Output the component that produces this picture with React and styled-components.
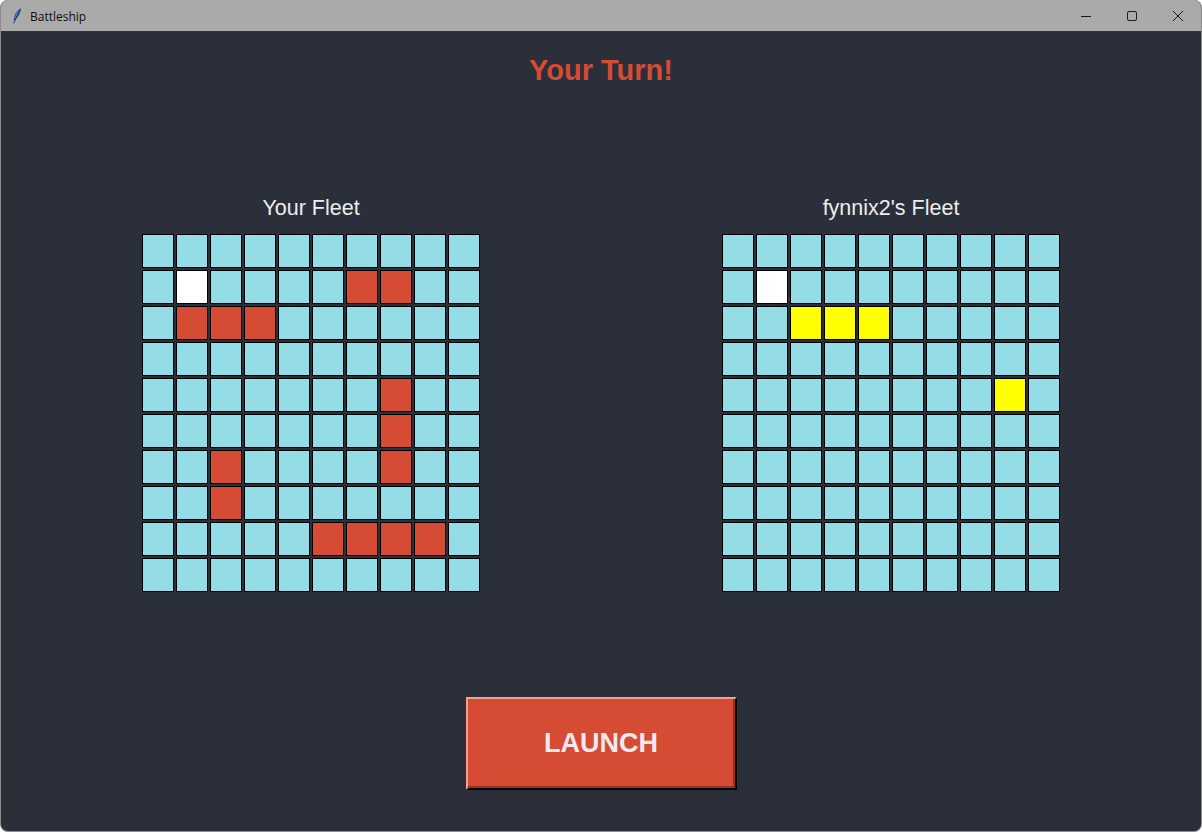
import React from "react";
import styled, { createGlobalStyle } from "styled-components";

const GlobalStyle = createGlobalStyle`
    html, body {
        margin: 0;
        padding: 0;
        background: #ffffff;
    }
    body {
        font-family: "Liberation Sans", Arial, sans-serif;
    }
`;

// 0 agua, 1 barco/impacto rojo, 2 fallo blanco, 3 impacto amarillo
const myFleet = [
    "0000000000",
    "0200001100",
    "0111000000",
    "0000000000",
    "0000000100",
    "0000000100",
    "0010000100",
    "0010000000",
    "0000011110",
    "0000000000",
];

const enemyFleet = [
    "0000000000",
    "0200000000",
    "0033300000",
    "0000000000",
    "0000000030",
    "0000000000",
    "0000000000",
    "0000000000",
    "0000000000",
    "0000000000",
];

const cellColors = {
    0: "#94dde6",
    1: "#d64b34",
    2: "#ffffff",
    3: "#ffff00",
};

const Feather = () => (
    <svg width="10" height="16" viewBox="0 0 10 16">
        <path d="M8.6 0.8 C5.5 2.5 3.2 5.8 2.4 10.2 L2.1 12.2 C4.8 10.4 7.4 6.8 8.6 0.8 Z" fill="#4d8fe0" stroke="#1d3d78" strokeWidth="0.8" />
        <path d="M7.8 2.4 L2.6 13.2 L1.6 15.4" fill="none" stroke="#1a2a48" strokeWidth="0.9" />
    </svg>
);

const App = () => {
    return (
        <>
            <GlobalStyle />
            <Ventana>
                <BarraTitulo>
                    <Titulo>
                        <Feather />
                        <span>Battleship</span>
                    </Titulo>
                    <Controles>
                        <Control>
                            <svg width="12" height="12" viewBox="0 0 12 12">
                                <line x1="1" y1="6.5" x2="11" y2="6.5" stroke="#1a1a1a" strokeWidth="1" />
                            </svg>
                        </Control>
                        <Control>
                            <svg width="12" height="12" viewBox="0 0 12 12">
                                <rect x="1.5" y="1.5" width="9" height="9" rx="1.5" fill="none" stroke="#1a1a1a" strokeWidth="1" />
                            </svg>
                        </Control>
                        <Control>
                            <svg width="12" height="12" viewBox="0 0 12 12">
                                <path d="M1 1 L11 11 M11 1 L1 11" stroke="#1a1a1a" strokeWidth="1" />
                            </svg>
                        </Control>
                    </Controles>
                </BarraTitulo>
                <Contenido>
                    <Turno>Your Turn!</Turno>
                    <Tableros>
                        <Panel>
                            <Etiqueta>Your Fleet</Etiqueta>
                            <Tablero>
                                {myFleet.map((row, r) =>
                                    row.split("").map((c, i) => <Celda key={r + "-" + i} $tipo={c} />)
                                )}
                            </Tablero>
                        </Panel>
                        <Panel>
                            <Etiqueta>fynnix2's Fleet</Etiqueta>
                            <Tablero>
                                {enemyFleet.map((row, r) =>
                                    row.split("").map((c, i) => <Celda key={r + "-" + i} $tipo={c} />)
                                )}
                            </Tablero>
                        </Panel>
                    </Tableros>
                    <BotonLanzar>LAUNCH</BotonLanzar>
                </Contenido>
            </Ventana>
        </>
    );
};

export default App;

const Ventana = styled.div`
    width: 1202px;
    height: 832px;
    box-sizing: border-box;
    display: flex;
    flex-direction: column;
    border-radius: 8px;
    overflow: hidden;
    background: #2b2f3a;
    border: 1px solid #8c8c8c;
    border-top: none;
`;

const BarraTitulo = styled.div`
    height: 31px;
    flex-shrink: 0;
    background: #aaaaaa;
    display: flex;
    align-items: center;
    justify-content: space-between;
`;

const Titulo = styled.div`
    display: flex;
    align-items: center;
    gap: 8px;
    padding-left: 11px;
    font-family: "Open Sans", "Noto Sans", sans-serif;
    font-size: 12px;
    color: #111111;
    padding-top: 1px;
`;

const Controles = styled.div`
    display: flex;
    height: 100%;
`;

const Control = styled.div`
    width: 46px;
    height: 100%;
    display: flex;
    align-items: center;
    justify-content: center;
`;

const Contenido = styled.div`
    flex: 1;
    display: flex;
    flex-direction: column;
    align-items: center;
    padding-top: 23px;
`;

const Turno = styled.h1`
    margin: 0;
    font-family: "Liberation Sans", Arial, sans-serif;
    font-size: 29px;
    line-height: 32px;
    font-weight: bold;
    color: #d64b34;
`;

const Tableros = styled.div`
    display: flex;
    gap: 242px;
    margin-top: 110px;
`;

const Panel = styled.div`
    display: flex;
    flex-direction: column;
    align-items: center;
`;

const Etiqueta = styled.div`
    font-family: "Liberation Sans", Arial, sans-serif;
    font-size: 21.5px;
    line-height: 24px;
    color: #ececf0;
    margin-bottom: 14px;
`;

const Tablero = styled.div`
    display: grid;
    grid-template-columns: repeat(10, 32px);
    grid-auto-rows: 34px;
    gap: 2px;
`;

const Celda = styled.div`
    box-sizing: border-box;
    border: 1px solid #000000;
    background: ${({ $tipo }) => cellColors[$tipo]};
`;

const BotonLanzar = styled.button`
    margin-top: 105px;
    width: 271px;
    height: 93px;
    box-sizing: border-box;
    background: #d64b34;
    border: none;
    border-top: 2px solid #f4a090;
    border-left: 2px solid #f4a090;
    border-right: 2px solid #000000;
    border-bottom: 2px solid #000000;
    box-shadow: inset -2px -2px 0 #9c2e1e;
    font-family: "Liberation Sans", Arial, sans-serif;
    font-size: 27px;
    font-weight: bold;
    color: #f2e8f0;
    cursor: pointer;
    padding: 0;
`;
